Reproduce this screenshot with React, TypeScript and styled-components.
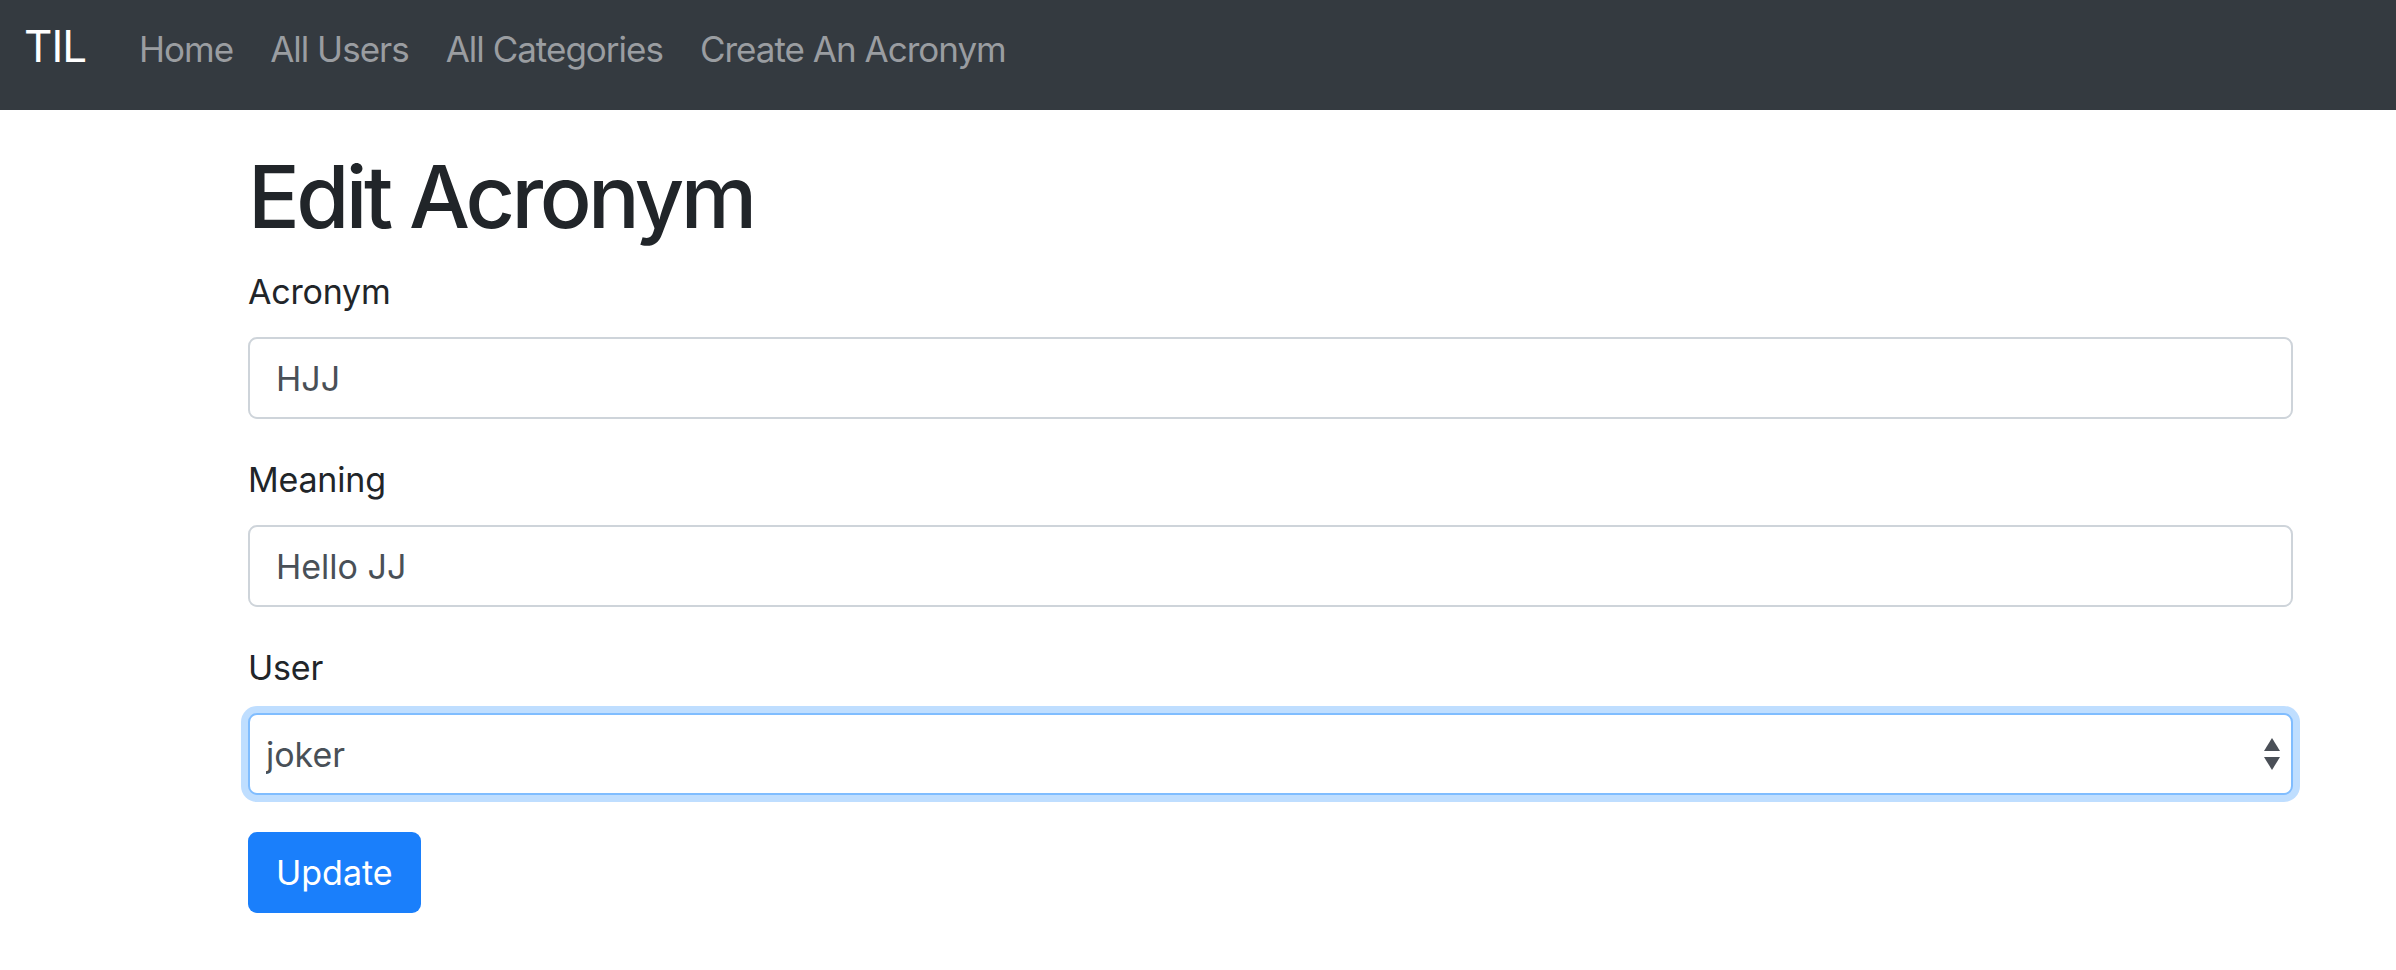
import React from 'react';
import styled, { createGlobalStyle } from 'styled-components';

const GlobalStyle = createGlobalStyle`
  body {
    margin: 0;
    background: #fff;
    font-family: Inter, "Noto Sans", "Liberation Sans", sans-serif;
    color: #212529;
  }
`;

const Navbar = styled.nav`
  box-sizing: border-box;
  display: flex;
  align-items: baseline;
  height: 110px;
  padding: 24px 0 0 24px;
  background: #343a40;
`;

const Brand = styled.a`
  font-size: 44px;
  letter-spacing: -1px;
  color: #fff;
  text-decoration: none;
  margin-right: 53px;
  line-height: 1;
`;

const NavList = styled.div`
  display: flex;
  align-items: baseline;
  gap: 37px;
`;

const NavLink = styled.a`
  font-size: 35px;
  letter-spacing: -1px;
  color: #9a9da1;
  text-decoration: none;
  line-height: 1;
`;

const Container = styled.main`
  width: 2045px;
  padding-left: 248px;
  display: flex;
  flex-direction: column;
`;

const Title = styled.h1`
  font-size: 86px;
  font-weight: 500;
  line-height: 1.2;
  margin: 36px 0 17px;
  letter-spacing: -3.6px;
`;

const FormGroup = styled.div`
  display: flex;
  flex-direction: column;
  margin-bottom: 35px;
`;

const Label = styled.label`
  font-size: 34px;
  letter-spacing: -0.2px;
  line-height: 1.5;
  margin-bottom: 20px;
`;

const TextInput = styled.input`
  box-sizing: border-box;
  height: 82px;
  width: 100%;
  padding: 0 26px;
  font-family: inherit;
  font-size: 34px;
  color: #495057;
  background: #fff;
  border: 2px solid #ced4da;
  border-radius: 9px;
  outline: none;
`;

const SelectWrap = styled.div`
  position: relative;
  width: 100%;
`;

const Select = styled.select<{ focused?: boolean }>`
  box-sizing: border-box;
  appearance: none;
  height: 82px;
  width: 100%;
  padding: 0 60px 0 16px;
  font-family: inherit;
  font-size: 34px;
  color: #495057;
  background: #fff;
  border: 2px solid ${({ focused }) => (focused ? '#80bdff' : '#ced4da')};
  border-radius: 9px;
  outline: none;
  ${({ focused }) => focused && 'box-shadow: 0 0 0 7px rgba(0, 123, 255, 0.25);'}
`;

const Arrows = styled.svg`
  position: absolute;
  right: 12px;
  top: 50%;
  transform: translateY(-50%);
  pointer-events: none;
`;

const SubmitButton = styled.button`
  align-self: flex-start;
  margin-top: 2px;
  height: 81px;
  padding: 0 28px;
  font-family: inherit;
  font-size: 34px;
  color: #fff;
  background: #1a7ffb;
  border: none;
  border-radius: 9px;
`;

export default function App() {
  return (
    <>
      <GlobalStyle />
      <Navbar>
        <Brand href="#">TIL</Brand>
        <NavList>
          <NavLink href="#">Home</NavLink>
          <NavLink href="#">All Users</NavLink>
          <NavLink href="#">All Categories</NavLink>
          <NavLink href="#">Create An Acronym</NavLink>
        </NavList>
      </Navbar>
      <Container>
        <Title>Edit Acronym</Title>
        <FormGroup>
          <Label htmlFor="short">Acronym</Label>
          <TextInput id="short" defaultValue="HJJ" />
        </FormGroup>
        <FormGroup>
          <Label htmlFor="long">Meaning</Label>
          <TextInput id="long" defaultValue="Hello JJ" />
        </FormGroup>
        <FormGroup>
          <Label htmlFor="userID">User</Label>
          <SelectWrap>
            <Select id="userID" focused defaultValue="joker">
              <option value="joker">joker</option>
            </Select>
            <Arrows width="18" height="34" viewBox="0 0 18 34">
              <path d="M9 1 L17 14 L1 14 Z" fill="#4a4f57" />
              <path d="M1 20 L17 20 L9 33 Z" fill="#4a4f57" />
            </Arrows>
          </SelectWrap>
        </FormGroup>
        <SubmitButton type="submit">Update</SubmitButton>
      </Container>
    </>
  );
}
